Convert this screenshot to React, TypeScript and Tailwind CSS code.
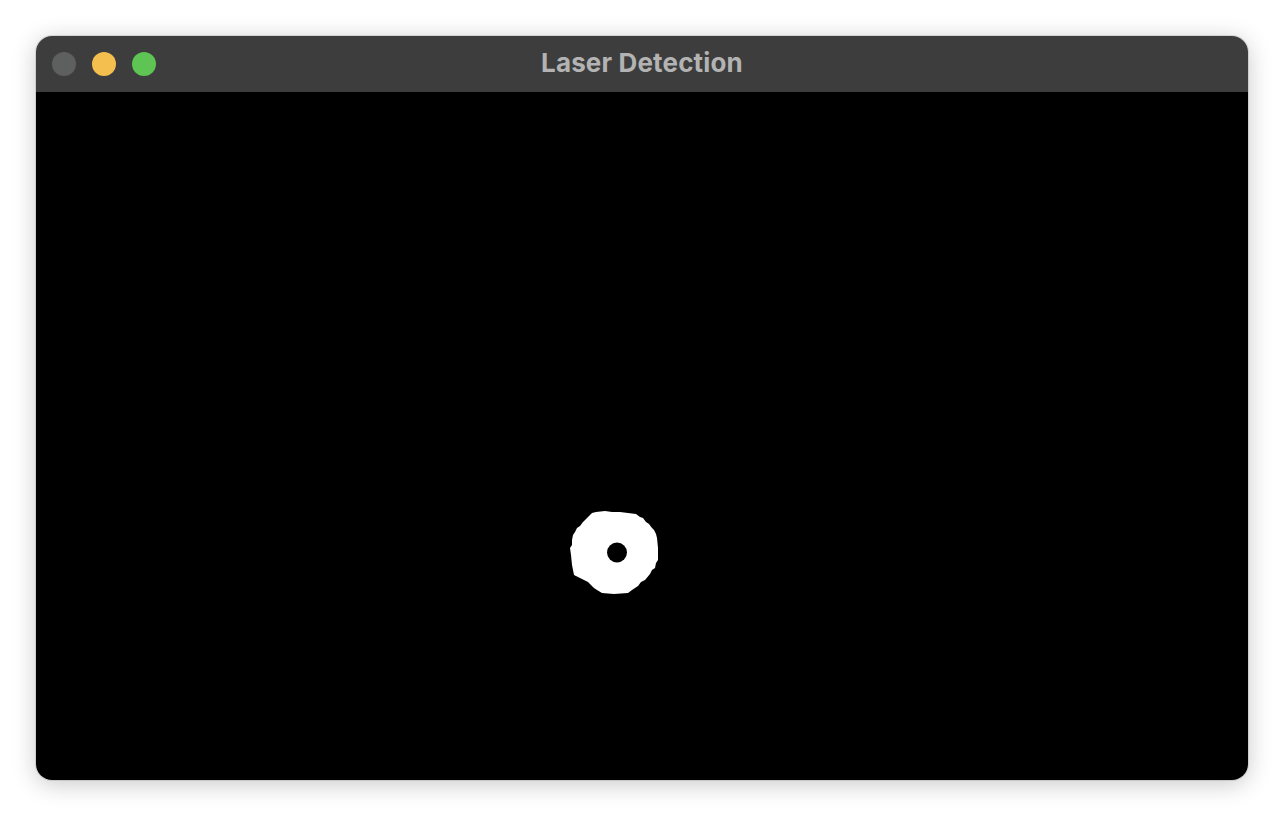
import React from 'react';

// body coords are relative to the black canvas (window left 36, canvas top 92)
const blob: [number, number][] = [
  [592, 513], [596, 512], [605, 511], [612, 512], [620, 512], [628, 513], [636, 514],
  [640, 517], [643, 518], [646, 522], [649, 524], [652, 528], [654, 530], [656, 534],
  [657, 538], [658, 548], [658, 560], [656, 563], [655, 568], [652, 570], [650, 574],
  [645, 580], [641, 582], [638, 586], [632, 590], [628, 593], [614, 594], [602, 593],
  [597, 590], [594, 588], [588, 582], [584, 580], [580, 578], [574, 575], [573, 570],
  [572, 565], [571, 555], [570, 548], [572, 545], [572, 540], [573, 535], [575, 532],
  [577, 528], [580, 526], [583, 522], [588, 517],
];

function TrafficLights() {
  return (
    <div className="flex items-center gap-4">
      <span className="w-6 h-6 rounded-full bg-[#5e5f5f]" />
      <span className="w-6 h-6 rounded-full bg-[#f4bf4f]" />
      <span className="w-6 h-6 rounded-full bg-[#5ec453]" />
    </div>
  );
}

export default function App() {
  const d =
    blob.map(([x, y], i) => `${i === 0 ? 'M' : 'L'}${x - 36} ${y - 92}`).join(' ') + ' Z';

  return (
    <div className="w-[1284px] h-[816px] bg-white p-9 font-['Inter','Liberation_Sans',sans-serif]">
      <div className="w-[1212px] h-[744px] rounded-2xl overflow-hidden flex flex-col shadow-[0_4px_24px_rgba(0,0,0,0.22)] ring-1 ring-black/10">
        {/* Title Bar */}
        <div className="h-14 bg-[#3c3d3c] flex items-center px-4 relative">
          <TrafficLights />
          <div className="absolute inset-0 flex items-center justify-center pointer-events-none">
            <span className="text-[26px] font-bold text-[#b3b3b3] tracking-[0.15px] -translate-y-[2px]">Laser Detection</span>
          </div>
        </div>

        {/* Canvas */}
        <div className="flex-1 bg-black">
          <svg width="1212" height="688" viewBox="0 0 1212 688" className="block">
            <path d={d} fill="#fff" />
            <circle cx={617 - 36} cy={552.5 - 92} r={10} fill="#000" />
          </svg>
        </div>
      </div>
    </div>
  );
}
